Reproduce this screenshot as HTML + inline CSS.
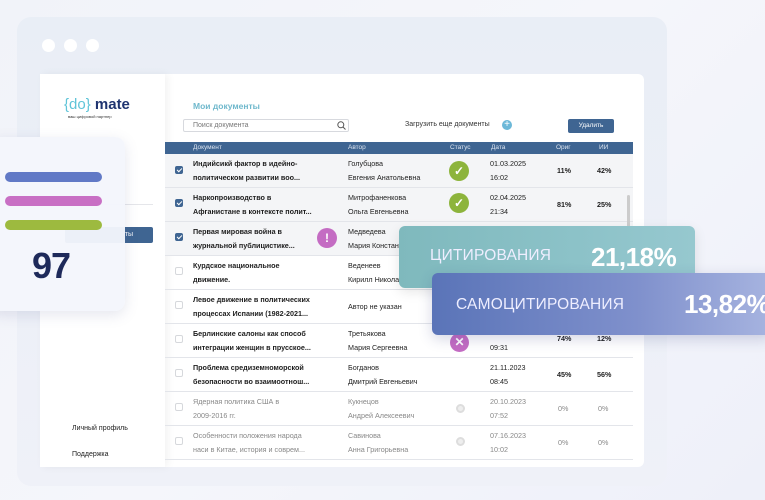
<!DOCTYPE html>
<html><head><meta charset="utf-8"><style>
*{margin:0;padding:0;box-sizing:border-box}
body{width:765px;height:500px;overflow:hidden;position:relative;font-family:"Liberation Sans",sans-serif;background:linear-gradient(135deg,#f1f3f9 0%,#f5f6fb 50%,#eef0f9 100%)}
.abs{position:absolute}
.win{left:17px;top:17px;width:650px;height:469px;border-radius:14px;background:linear-gradient(180deg,#e9eef6,#eff1f8);}
.dot{width:13px;height:13px;border-radius:50%;background:#fff;top:39px}
.inner{left:40px;top:74px;width:604px;height:393px;background:#fff;border-radius:6px}
.side{left:40px;top:74px;width:125px;height:393px;background:#fff;box-shadow:3px 0 8px rgba(0,0,0,.05)}
.t{font-size:7px;color:#222;line-height:17px}
.row{left:165px;width:468px;height:34px;border-bottom:1px solid #e3e5ea}
.cb{left:175px;width:8px;height:8px;border:1px solid #d6d8dc;border-radius:2px;background:#fff}
.cb.on{background:#3f6592;border-color:#3f6592}
.cb.on:after{content:"";position:absolute;left:2px;top:0px;width:2px;height:4px;border:solid #fff;border-width:0 1.2px 1.2px 0;transform:rotate(45deg)}
.cell{font-size:7.2px;line-height:14px;color:#1e1e1e}
.b{font-weight:bold}
.g{color:#888}
.st{width:20px;height:20px;border-radius:50%;color:#fff;font-weight:bold;text-align:center;line-height:20px;font-size:12px}
.grey{width:9px;height:9px;border-radius:50%;border:2px solid #ddd;background:#eee}
</style></head><body>
<div class="abs win"></div>
<div class="abs dot" style="left:42px"></div>
<div class="abs dot" style="left:64px"></div>
<div class="abs dot" style="left:86px"></div>
<div class="abs inner"></div>
<div class="abs side"></div>
<div class="abs" style="left:64px;top:96px;font-size:15px;font-weight:bold;color:#1f3470"><span style="color:#5fc4d8;font-weight:normal">{do}</span> mate</div>
<div class="abs" style="left:68px;top:114px;font-size:4px;color:#333">ваш цифровой партнер</div>
<div class="abs" style="left:65px;top:204px;width:88px;height:1px;background:#e5e6ea"></div>
<div class="abs" style="left:65px;top:227px;width:88px;height:16px;background:#3f6592;border-radius:2px;color:#fff;font-size:7px;line-height:16px;text-align:right;padding-right:20px">ты</div>
<div class="abs t" style="left:72px;top:420px">Личный профиль</div>
<div class="abs t" style="left:72px;top:446px">Поддержка</div>

<div class="abs" style="left:193px;top:101px;font-size:8.5px;font-weight:bold;color:#6fb8cc">Мои документы</div>
<div class="abs" style="left:183px;top:119px;width:166px;height:13px;border:1px solid #d7d9de;border-radius:2px;font-size:7px;color:#777;line-height:11px;padding-left:9px">Поиск документа</div>
<svg class="abs" style="left:337px;top:121px" width="9" height="9"><circle cx="3.8" cy="3.8" r="3" fill="none" stroke="#555" stroke-width="1"/><path d="M6 6l2.5 2.5" stroke="#555"/></svg>
<div class="abs" style="left:405px;top:121px;font-size:7px;color:#333">Загрузить еще документы</div>
<div class="abs" style="left:502px;top:120px;width:10px;height:10px;border-radius:50%;background:#6cb8d8;color:#fff;font-size:10px;line-height:10px;text-align:center">+</div>
<div class="abs" style="left:568px;top:119px;width:46px;height:14px;background:#3f6592;border-radius:2px;color:#fff;font-size:6.5px;line-height:14px;text-align:center">Удалить</div>

<div class="abs" style="left:165px;top:142px;width:468px;height:12px;background:#3f6592"></div>
<div class="abs" style="left:193px;top:144px;font-size:6.5px;color:#dce4ef">Документ</div>
<div class="abs" style="left:348px;top:144px;font-size:6.5px;color:#dce4ef">Автор</div>
<div class="abs" style="left:450px;top:144px;font-size:6.5px;color:#dce4ef">Статус</div>
<div class="abs" style="left:491px;top:144px;font-size:6.5px;color:#dce4ef">Дата</div>
<div class="abs" style="left:556px;top:144px;font-size:6.5px;color:#dce4ef">Ориг</div>
<div class="abs" style="left:599px;top:144px;font-size:6.5px;color:#dce4ef">ИИ</div>

<div class="abs row" style="top:154px;background:#f4f5f7"></div>
<div class="abs row" style="top:188px;background:#f4f5f7"></div>
<div class="abs row" style="top:222px;background:#f4f5f7"></div>
<div class="abs row" style="top:256px"></div>
<div class="abs row" style="top:290px"></div>
<div class="abs row" style="top:324px"></div>
<div class="abs row" style="top:358px"></div>
<div class="abs row" style="top:392px"></div>
<div class="abs row" style="top:426px"></div>
<div class="abs" style="left:627px;top:195px;width:3px;height:35px;background:#ccc;border-radius:2px"></div>

<div class="abs cb on" style="top:166px"></div>
<div class="abs cb on" style="top:199px"></div>
<div class="abs cb on" style="top:233px"></div>
<div class="abs cb" style="top:267px"></div>
<div class="abs cb" style="top:301px"></div>
<div class="abs cb" style="top:335px"></div>
<div class="abs cb" style="top:369px"></div>
<div class="abs cb" style="top:403px"></div>
<div class="abs cb" style="top:437px"></div>

<div class="abs cell b" style="left:193px;top:157px">Индийсикй фактор в идейно-<br>политическом развитии воо...</div>
<div class="abs cell" style="left:348px;top:157px">Голубцова<br>Евгения Анатольевна</div>
<div class="abs st" style="left:449px;top:161px;background:#8db43c">✓</div>
<div class="abs cell" style="left:490px;top:157px">01.03.2025<br>16:02</div>
<div class="abs cell b" style="left:557px;top:164px">11%</div>
<div class="abs cell b" style="left:597px;top:164px">42%</div>

<div class="abs cell b" style="left:193px;top:191px">Наркопроизводство в<br>Афганистане в контексте полит...</div>
<div class="abs cell" style="left:348px;top:191px">Митрофаненкова<br>Ольга Евгеньевна</div>
<div class="abs st" style="left:449px;top:193px;background:#8db43c">✓</div>
<div class="abs cell" style="left:490px;top:191px">02.04.2025<br>21:34</div>
<div class="abs cell b" style="left:557px;top:198px">81%</div>
<div class="abs cell b" style="left:597px;top:198px">25%</div>

<div class="abs cell b" style="left:193px;top:225px">Первая мировая война в<br>журнальной публицистике...</div>
<div class="abs st" style="left:317px;top:228px;background:#c46cc3">!</div>
<div class="abs cell" style="left:348px;top:225px">Медведева<br>Мария Констан</div>

<div class="abs cell b" style="left:193px;top:259px">Курдское национальное<br>движение.</div>
<div class="abs cell" style="left:348px;top:259px">Веденеев<br>Кирилл Никола</div>

<div class="abs cell b" style="left:193px;top:293px">Левое движение в политических<br>процессах Испании (1982-2021...</div>
<div class="abs cell" style="left:348px;top:300px">Автор не указан</div>

<div class="abs cell b" style="left:193px;top:327px">Берлинские салоны как способ<br>интеграции женщин в прусское...</div>
<div class="abs cell" style="left:348px;top:327px">Третьякова<br>Мария Сергеевна</div>
<div class="abs st" style="left:450px;top:333px;width:19px;height:19px;line-height:19px;background:#c46cc3">✕</div>
<div class="abs cell" style="left:490px;top:341px">09:31</div>
<div class="abs cell b" style="left:557px;top:332px">74%</div>
<div class="abs cell b" style="left:597px;top:332px">12%</div>

<div class="abs cell b" style="left:193px;top:361px">Проблема средиземноморской<br>безопасности во взаимоотнош...</div>
<div class="abs cell" style="left:348px;top:361px">Богданов<br>Дмитрий Евгеньевич</div>
<div class="abs cell" style="left:490px;top:361px">21.11.2023<br>08:45</div>
<div class="abs cell b" style="left:557px;top:368px">45%</div>
<div class="abs cell b" style="left:597px;top:368px">56%</div>

<div class="abs cell g" style="left:193px;top:395px">Ядерная политика США в<br>2009-2016 гг.</div>
<div class="abs cell g" style="left:348px;top:395px">Кукнецов<br>Андрей Алексеевич</div>
<div class="abs grey" style="left:456px;top:404px"></div>
<div class="abs cell g" style="left:490px;top:395px">20.10.2023<br>07:52</div>
<div class="abs cell g" style="left:558px;top:402px">0%</div>
<div class="abs cell g" style="left:598px;top:402px">0%</div>

<div class="abs cell g" style="left:193px;top:429px">Особенности положения народа<br>наси в Китае, история и соврем...</div>
<div class="abs cell g" style="left:348px;top:429px">Савинова<br>Анна Григорьевна</div>
<div class="abs grey" style="left:456px;top:437px"></div>
<div class="abs cell g" style="left:490px;top:429px">07.16.2023<br>10:02</div>
<div class="abs cell g" style="left:558px;top:436px">0%</div>
<div class="abs cell g" style="left:598px;top:436px">0%</div>

<div class="abs" style="left:-10px;top:137px;width:135px;height:174px;border-radius:10px;background:rgba(244,246,252,.96);box-shadow:0 4px 14px rgba(80,90,140,.15)"></div>
<div class="abs" style="left:5px;top:172px;width:97px;height:10px;border-radius:5px;background:#6179c6"></div>
<div class="abs" style="left:5px;top:196px;width:97px;height:10px;border-radius:5px;background:#c86fc4"></div>
<div class="abs" style="left:5px;top:220px;width:97px;height:10px;border-radius:5px;background:#9dba3f"></div>
<div class="abs" style="left:32px;top:245px;font-size:36px;font-weight:bold;color:#1e2a5a;letter-spacing:-1px">97</div>

<div class="abs" style="left:399px;top:226px;width:296px;height:62px;border-radius:6px;background:linear-gradient(90deg,#7fb9bd,#8cc2c8 60%,#96c8cf);box-shadow:0 4px 12px rgba(0,0,0,.1)"></div>
<div class="abs" style="left:430px;top:247px;font-size:15.5px;color:#eef;letter-spacing:.2px">ЦИТИРОВАНИЯ</div>
<div class="abs" style="left:591px;top:242px;font-size:26px;font-weight:bold;color:#fff;letter-spacing:-.5px">21,18%</div>
<div class="abs" style="left:432px;top:273px;width:340px;height:62px;border-radius:6px;background:linear-gradient(90deg,#5a74b8,#7f90cc 60%,#a7b4e0);box-shadow:0 4px 14px rgba(40,50,120,.2)"></div>
<div class="abs" style="left:456px;top:296px;font-size:15.5px;color:#eef;letter-spacing:.2px">САМОЦИТИРОВАНИЯ</div>
<div class="abs" style="left:684px;top:289px;font-size:26px;font-weight:bold;color:#fff;letter-spacing:-.5px">13,82%</div>
</body></html>
